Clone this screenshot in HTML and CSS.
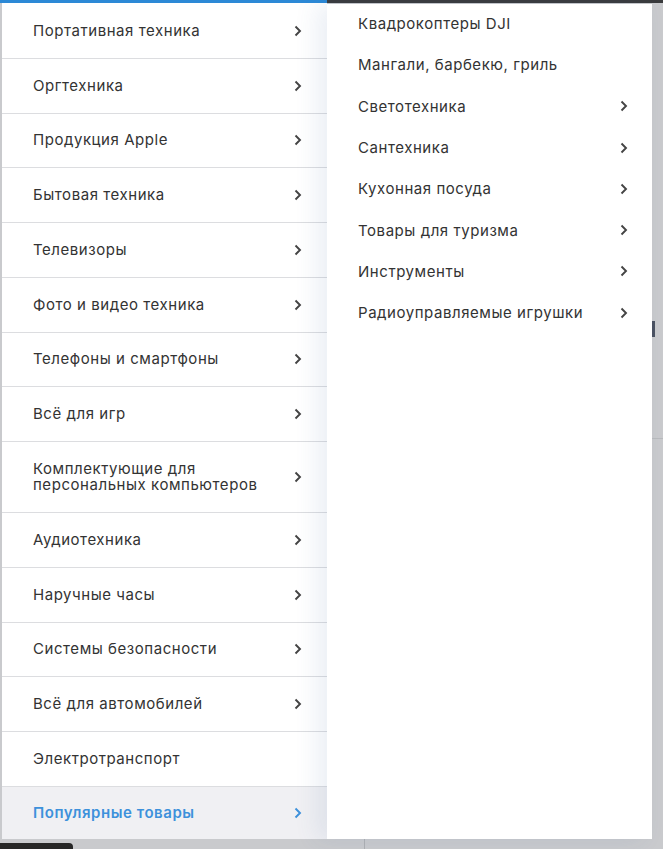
FILE: index.html
```html
<!DOCTYPE html>
<html lang="ru">
<head>
<meta charset="utf-8">
<link rel="stylesheet" href="styles.css">
</head>
<body>
<div class="topbar"><div class="topbar-accent"></div></div>
<div class="menu">
  <ul class="cats">
    <li class="cat"><span>Портативная техника</span><svg class="chev" viewBox="0 0 8 12"><path d="M1.5 1.5 6 6l-4.5 4.5"/></svg></li>
    <li class="cat"><span>Оргтехника</span><svg class="chev" viewBox="0 0 8 12"><path d="M1.5 1.5 6 6l-4.5 4.5"/></svg></li>
    <li class="cat"><span>Продукция Apple</span><svg class="chev" viewBox="0 0 8 12"><path d="M1.5 1.5 6 6l-4.5 4.5"/></svg></li>
    <li class="cat"><span>Бытовая техника</span><svg class="chev" viewBox="0 0 8 12"><path d="M1.5 1.5 6 6l-4.5 4.5"/></svg></li>
    <li class="cat"><span>Телевизоры</span><svg class="chev" viewBox="0 0 8 12"><path d="M1.5 1.5 6 6l-4.5 4.5"/></svg></li>
    <li class="cat"><span>Фото и видео техника</span><svg class="chev" viewBox="0 0 8 12"><path d="M1.5 1.5 6 6l-4.5 4.5"/></svg></li>
    <li class="cat"><span>Телефоны и смартфоны</span><svg class="chev" viewBox="0 0 8 12"><path d="M1.5 1.5 6 6l-4.5 4.5"/></svg></li>
    <li class="cat"><span>Всё для игр</span><svg class="chev" viewBox="0 0 8 12"><path d="M1.5 1.5 6 6l-4.5 4.5"/></svg></li>
    <li class="cat cat-tall"><span>Комплектующие для<br>персональных компьютеров</span><svg class="chev" viewBox="0 0 8 12"><path d="M1.5 1.5 6 6l-4.5 4.5"/></svg></li>
    <li class="cat"><span>Аудиотехника</span><svg class="chev" viewBox="0 0 8 12"><path d="M1.5 1.5 6 6l-4.5 4.5"/></svg></li>
    <li class="cat"><span>Наручные часы</span><svg class="chev" viewBox="0 0 8 12"><path d="M1.5 1.5 6 6l-4.5 4.5"/></svg></li>
    <li class="cat"><span>Системы безопасности</span><svg class="chev" viewBox="0 0 8 12"><path d="M1.5 1.5 6 6l-4.5 4.5"/></svg></li>
    <li class="cat"><span>Всё для автомобилей</span><svg class="chev" viewBox="0 0 8 12"><path d="M1.5 1.5 6 6l-4.5 4.5"/></svg></li>
    <li class="cat"><span>Электротранспорт</span></li>
    <li class="cat cat-active"><span>Популярные товары</span><svg class="chev" viewBox="0 0 8 12"><path d="M1.5 1.5 6 6l-4.5 4.5"/></svg></li>
  </ul>
  <ul class="subs">
    <li class="sub"><span>Квадрокоптеры DJI</span></li>
    <li class="sub"><span>Мангали, барбекю, гриль</span></li>
    <li class="sub"><span>Светотехника</span><svg class="chev" viewBox="0 0 8 12"><path d="M1.5 1.5 6 6l-4.5 4.5"/></svg></li>
    <li class="sub"><span>Сантехника</span><svg class="chev" viewBox="0 0 8 12"><path d="M1.5 1.5 6 6l-4.5 4.5"/></svg></li>
    <li class="sub"><span>Кухонная посуда</span><svg class="chev" viewBox="0 0 8 12"><path d="M1.5 1.5 6 6l-4.5 4.5"/></svg></li>
    <li class="sub"><span>Товары для туризма</span><svg class="chev" viewBox="0 0 8 12"><path d="M1.5 1.5 6 6l-4.5 4.5"/></svg></li>
    <li class="sub"><span>Инструменты</span><svg class="chev" viewBox="0 0 8 12"><path d="M1.5 1.5 6 6l-4.5 4.5"/></svg></li>
    <li class="sub"><span>Радиоуправляемые игрушки</span><svg class="chev" viewBox="0 0 8 12"><path d="M1.5 1.5 6 6l-4.5 4.5"/></svg></li>
  </ul>
  <div class="backdrop-side">
    <div class="bg-mark"></div>
    <div class="bg-line"></div>
  </div>
</div>
<div class="bottom">
  <div class="bg-pill"></div>
  <div class="bg-divider"></div>
</div>
</body>
</html>
```

FILE: styles.css
```css
* { box-sizing: border-box; }
html, body { margin: 0; padding: 0; }
body {
  background: #c9cacd;
  font-family: Inter, "Noto Sans", sans-serif;
  font-size: 15px;
  letter-spacing: 0.55px;
  color: #333;
  width: 663px;
  height: 849px;
  overflow: hidden;
}
.topbar {
  height: 3px;
  background: #3a3b3d;
  display: flex;
}
.topbar-accent {
  width: 327px;
  background: #2c89d6;
}
.menu {
  display: flex;
  height: 836px;
  padding-left: 2px;
}
ul { list-style: none; margin: 0; padding: 0; }
.cats {
  width: 325px;
  background: #fff;
  display: flex;
  flex-direction: column;
  padding-top: 1px;
}
.cat {
  height: 54.75px;
  flex: none;
  border-bottom: 1px solid #dcdde0;
  display: flex;
  align-items: center;
  justify-content: space-between;
  padding: 0 25px 0 31px;
  line-height: 16px;
}
.cat-tall { height: 71px; }
.cat-active {
  flex: 1;
  border-bottom: none;
  background: #f0f0f3;
  color: #3d91db;
  font-weight: 600;
}
.cat-active .chev path { stroke: #3d91db; }
.chev {
  width: 8px;
  height: 12px;
  flex: none;
}
.chev path {
  fill: none;
  stroke: #444;
  stroke-width: 1.9;
}
.subs {
  width: 325px;
  margin-top: 1px;
  background: #fff;
  box-shadow: -10px 0 22px rgba(60, 100, 160, 0.10);
  position: relative;
  z-index: 1;
}
.sub {
  height: 41.3px;
  display: flex;
  align-items: center;
  justify-content: space-between;
  padding: 0 24px 2px 31px;
}
.backdrop-side {
  flex: 1;
  position: relative;
}
.bg-mark {
  position: absolute;
  left: 0;
  top: 318px;
  width: 3px;
  height: 16px;
  background: #4b5262;
}
.bg-line {
  position: absolute;
  left: 0;
  right: 0;
  top: 435px;
  height: 1px;
  background: #b8babd;
}
.bottom {
  height: 10px;
  position: relative;
}
.bg-pill {
  position: absolute;
  left: 0;
  top: 4px;
  width: 73px;
  height: 10px;
  background: #262626;
  border-top-right-radius: 4px;
}
.bg-divider {
  position: absolute;
  left: 364px;
  top: 0;
  width: 1px;
  height: 10px;
  background: #aeb0b3;
}
```
